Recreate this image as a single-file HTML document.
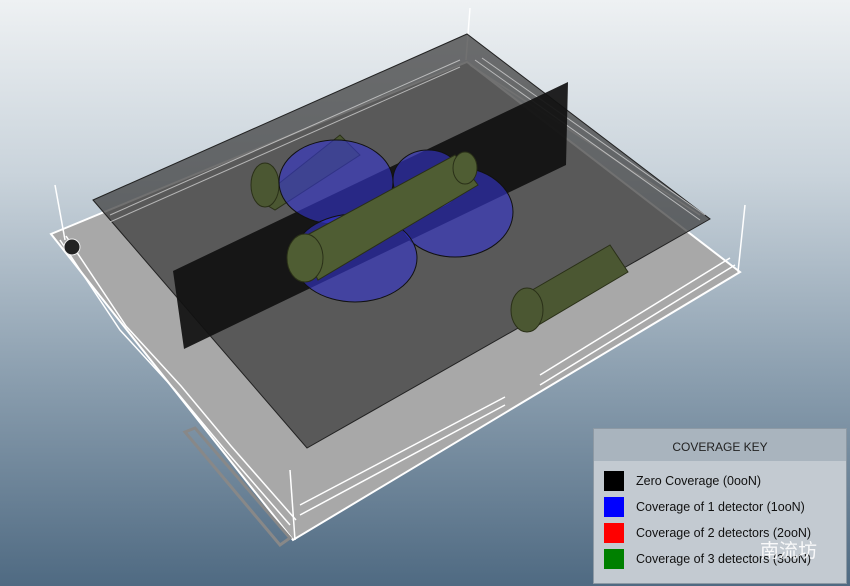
<!DOCTYPE html>
<html><head><meta charset="utf-8"><style>
html,body{margin:0;padding:0;width:850px;height:586px;overflow:hidden;font-family:"Liberation Sans","Noto Sans CJK SC",sans-serif}
.bg{position:absolute;left:0;top:0;width:850px;height:586px;background:linear-gradient(#eef1f3 0%,#c9d3db 30%,#8fa2b2 62%,#4f6a82 100%)}
svg{position:absolute;left:0;top:0}
.key{position:absolute;left:593px;top:428px;width:252px;height:154px;background:#c3cad1;border:1px solid #8d99a4}
.kh{height:32px;background:#a9b4be;text-align:center;line-height:36px;font-size:12px;color:#222}
.row{position:absolute;left:10px;height:20px;font-size:12.5px;color:#111;line-height:20px}
.sw{display:inline-block;width:20px;height:20px;vertical-align:top;margin-right:12px}
.wm{position:absolute;left:760px;top:536px;font-size:19px;color:#fff;font-family:"Noto Sans CJK SC",sans-serif;opacity:.9}
</style></head><body>
<div class="bg"></div>
<svg width="850" height="586" viewBox="0 0 850 586">
 <polygon points="51,234 467,62 740,272 293,540" fill="#a8a8a8" stroke="#fff" stroke-width="2"/>
 <polygon points="185,432 280,545 290,538 195,428" fill="none" stroke="#888" stroke-width="3"/>
 <g stroke="#fff" stroke-width="1.5" fill="none">
  <polyline points="60,240 120,330 175,390 225,450 290,525"/>
  <polyline points="66,236 126,326 181,386 231,446 296,520"/>
  <polyline points="540,385 735,265"/><polyline points="540,375 730,258"/>
  <polyline points="300,515 505,405"/><polyline points="300,505 505,397"/>
  <line x1="470" y1="8" x2="466" y2="60"/><line x1="55" y1="185" x2="65" y2="240"/>
  <line x1="745" y1="205" x2="738" y2="272"/><line x1="290" y1="470" x2="295" y2="540"/>
  <polyline points="470,65 700,215"/>
 </g>
 <polygon points="93,200 467,34 710,219 307,448" fill="#3a3a3a" fill-opacity=".72" stroke="#222"/>
 <g stroke="#ddd" stroke-width="1" fill="none" opacity=".7">
  <polyline points="110,215 460,60"/><polyline points="110,222 460,67"/>
  <polyline points="475,60 700,220"/><polyline points="482,58 705,215"/>
 </g>
 <g fill="#4b5732" stroke="#2a3018">
  <path d="M258,200 L340,135 L360,155 L275,210 Z"/>
  <ellipse cx="265" cy="185" rx="14" ry="22"/>
  <path d="M515,300 L610,245 L628,272 L530,330 Z"/>
  <ellipse cx="527" cy="310" rx="16" ry="22"/>
 </g>
 <polygon points="173,271 568,82 566,165 184,349" fill="#111" fill-opacity=".93"/>
 <g fill="#3535d0" fill-opacity=".6" stroke="#111">
  <ellipse cx="336" cy="182" rx="57" ry="42"/>
  <ellipse cx="428" cy="180" rx="35" ry="30"/>
  <ellipse cx="455" cy="212" rx="58" ry="45"/>
  <ellipse cx="355" cy="258" rx="62" ry="44"/>
 </g>
 <g fill="#4f5d33" stroke="#2a3018">
  <path d="M298,240 L455,155 L478,185 L318,280 Z"/>
  <ellipse cx="305" cy="258" rx="18" ry="24"/>
  <ellipse cx="465" cy="168" rx="12" ry="16"/>
 </g>
 <circle cx="72" cy="247" r="8" fill="#222" stroke="#eee"/>
</svg>
<div class="key">
 <div class="kh">COVERAGE KEY</div>
 <div class="row" style="top:42px"><span class="sw" style="background:#000"></span>Zero Coverage (0ooN)</div>
 <div class="row" style="top:68px"><span class="sw" style="background:#0000ff"></span>Coverage of 1 detector (1ooN)</div>
 <div class="row" style="top:94px"><span class="sw" style="background:#ff0000"></span>Coverage of 2 detectors (2ooN)</div>
 <div class="row" style="top:120px"><span class="sw" style="background:#008000"></span>Coverage of 3 detectors (3ooN)</div>
</div>
<div class="wm">南流坊</div>
</body></html>
